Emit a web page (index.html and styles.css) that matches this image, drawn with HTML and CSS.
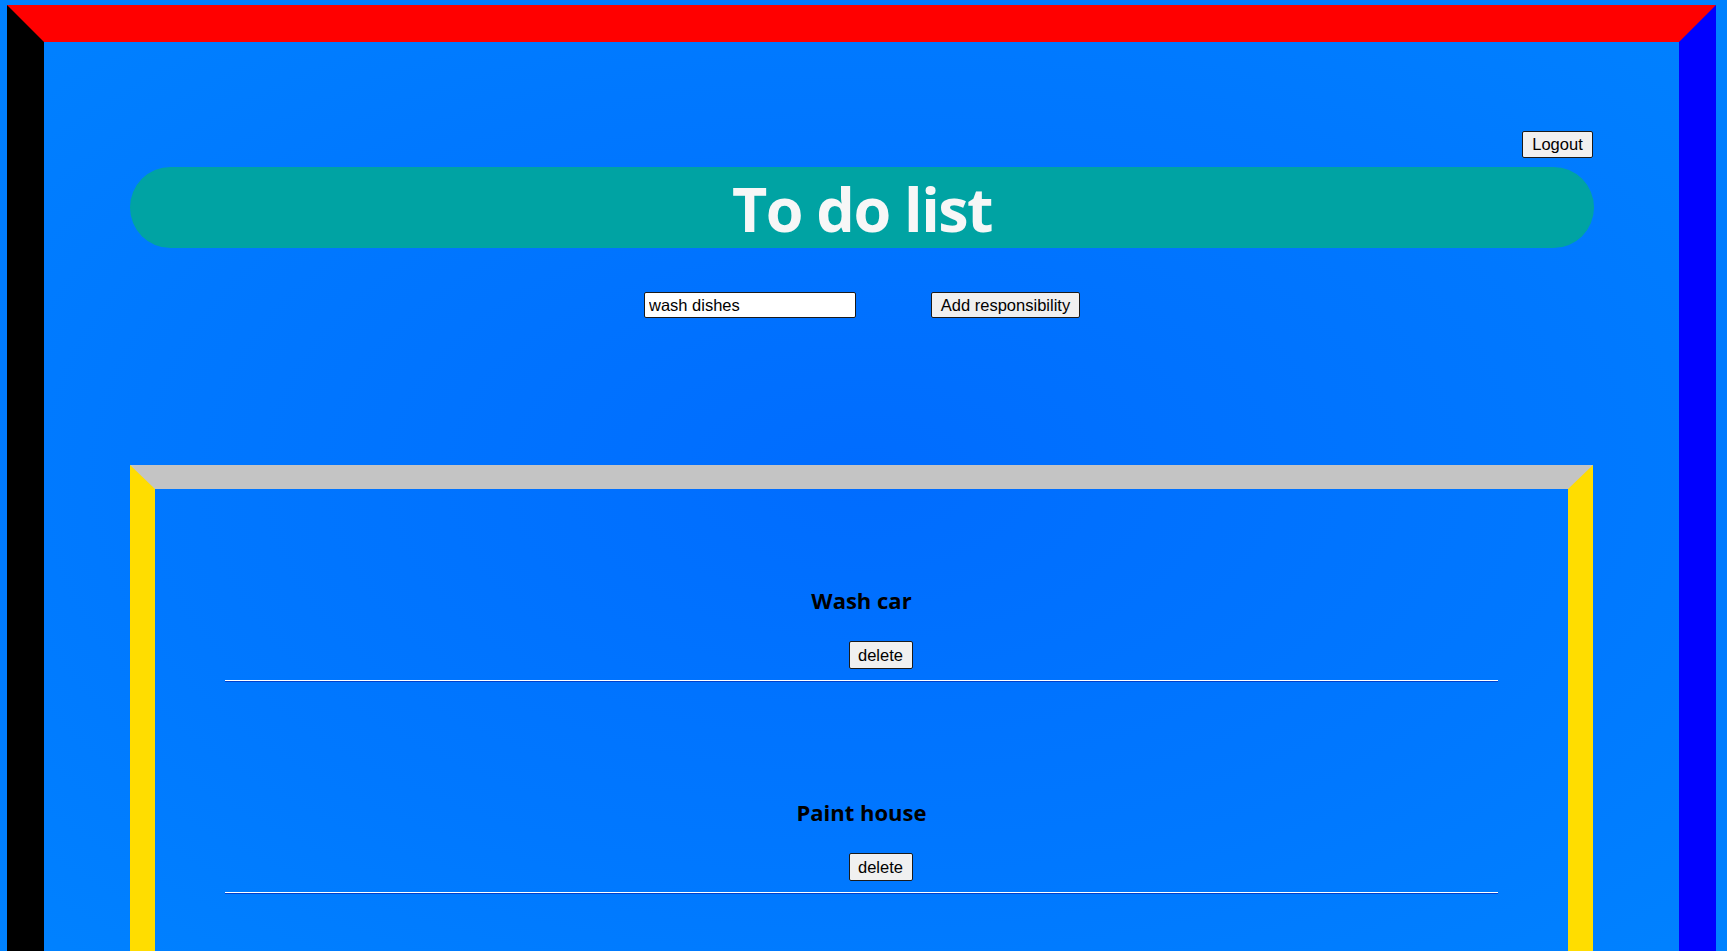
FILE: index.html
```html
<!DOCTYPE html>
<html lang="en">
<head>
<meta charset="utf-8">
<title>To do list</title>
<link rel="stylesheet" href="styles.css">
</head>
<body>
  <div class="frame">
    <div class="content">
      <div class="topbar">
        <button class="btn btn-logout" type="button">Logout</button>
      </div>
      <h1 class="banner">To do list</h1>
      <form class="add-row" onsubmit="return false;">
        <input class="task-input" type="text" value="wash dishes">
        <button class="btn btn-add" type="submit">Add responsibility</button>
      </form>
      <div class="list">
        <div class="item">
          <h3 class="item-title">Wash car</h3>
          <div class="actions"><button class="btn btn-delete" type="button">delete</button></div>
          <hr class="sep">
        </div>
        <div class="item">
          <h3 class="item-title">Paint house</h3>
          <div class="actions"><button class="btn btn-delete" type="button">delete</button></div>
          <hr class="sep">
        </div>
      </div>
    </div>
  </div>
</body>
</html>
```
FILE: styles.css
```css
html, body {
  margin: 0;
  padding: 0;
  height: 951px;
  overflow: hidden;
}

body {
  background: radial-gradient(ellipse at 50% 50%, #006cff 0%, #0078ff 60%, #0082ff 100%);
  font-family: "Liberation Sans", Arial, sans-serif;
}

.frame {
  margin: 5px 11px 0 7px;
  border-style: solid;
  border-width: 37px;
  border-color: #ff0000 #0000ff #ff0000 #000000;
  min-height: 1300px;
}

.content {
  padding: 89px 85px 0 86px;
}

.topbar {
  display: flex;
  justify-content: flex-end;
}

.btn {
  font-family: "Liberation Sans", Arial, sans-serif;
  font-size: 16.5px;
  color: #000;
  background: #f0f0f0;
  border: 1px solid #1a1a1a;
  border-radius: 2px;
  padding: 0 8px;
  box-sizing: border-box;
  cursor: pointer;
}

.btn-logout {
  height: 27px;
  width: 71px;
  padding: 0;
  margin-right: 1px;
}

.banner {
  margin: 9px 0 0;
  box-sizing: border-box;
  height: 81px;
  padding-top: 2px;
  line-height: 79px;
  background: #00a3a3;
  border-radius: 41px;
  text-align: center;
  color: #f7f7f7;
  font-family: "Open Sans", "Noto Sans", sans-serif;
  font-weight: 700;
  font-size: 61px;
  letter-spacing: -1.5px;
}

.add-row {
  margin: 44px 0 0;
  display: flex;
  justify-content: center;
  gap: 75px;
}

.task-input {
  width: 212px;
  height: 26px;
  box-sizing: border-box;
  border: 1px solid #1a1a1a;
  border-radius: 2px;
  padding: 0 4px;
  font-family: "Liberation Sans", Arial, sans-serif;
  font-size: 16.5px;
  color: #000;
  background: #fff;
  outline: none;
}

.btn-add {
  height: 26px;
  width: 149px;
  padding: 0;
}

.list {
  margin: 147px 1px 0 0;
  border-style: solid;
  border-width: 24px 25px 25px 25px;
  border-color: #c4c4c4 #ffdd00 #c4c4c4 #ffdd00;
  padding: 0 70px;
  min-height: 700px;
}

.item {
  padding-top: 96px;
}

.item-title {
  margin: 0;
  text-align: center;
  font-family: "Open Sans", "Noto Sans", sans-serif;
  font-weight: 700;
  font-size: 22px;
  line-height: 30px;
  color: #000;
}

.actions {
  display: flex;
  justify-content: center;
  padding-left: 38px;
  margin-top: 26px;
}

.btn-delete {
  height: 28px;
  width: 64px;
  padding: 0;
}

.sep {
  margin: 11px 0 19px;
  height: 0;
  border: 0;
  border-top: 1px solid #ffffff;
  border-bottom: 1px solid #0040cc;
}
```
